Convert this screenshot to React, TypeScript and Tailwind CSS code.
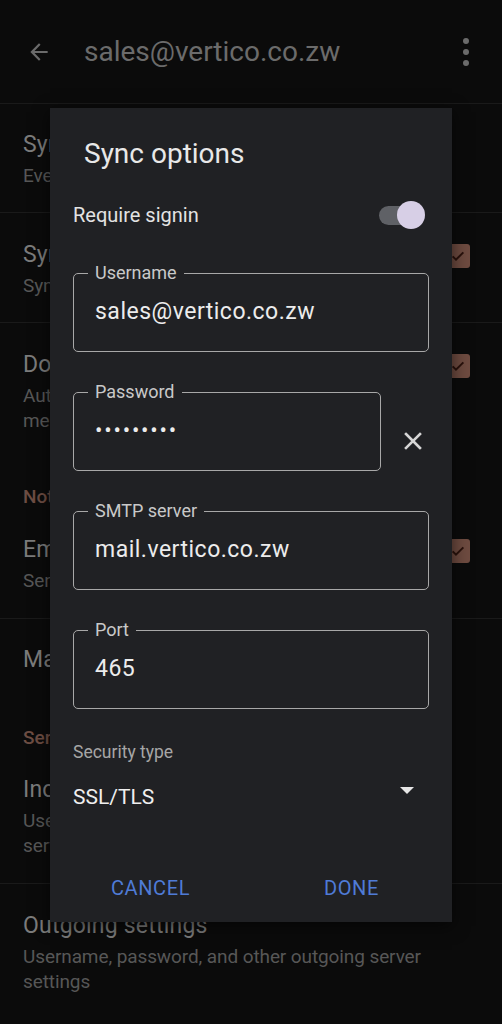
import React from "react";

const font = { fontFamily: "Roboto, 'Noto Sans', sans-serif" };

function Item({
  title,
  sub,
  h,
  pt,
  check,
  border = true,
}: {
  title: string;
  sub?: string[];
  h: string;
  pt: string;
  check?: boolean;
  border?: boolean;
}) {
  return (
    <div className={`${h} ${pt} ${border ? "border-b border-[#1a1a1a]" : ""} flex items-start justify-between pl-[23px] pr-[32px]`}>
      <div className="flex flex-col">
        <div className="text-[23px] leading-[28px] tracking-[0.2px] text-[#7b7b7b]">{title}</div>
        {sub && (
          <div className="mt-[4px] flex flex-col">
            {sub.map((s) => (
              <div key={s} className="text-[19px] leading-[25px] tracking-[-0.1px] text-[#575757]">
                {s}
              </div>
            ))}
          </div>
        )}
      </div>
      {check && (
        <div className="mt-[3px] flex h-[24px] w-[24px] items-center justify-center rounded-[3px] bg-[#6e4b40]">
          <svg width="16" height="16" viewBox="0 0 24 24" fill="none" stroke="#2a120c" strokeWidth="3">
            <path d="M4 12.5l5 5L20 6.5" />
          </svg>
        </div>
      )}
    </div>
  );
}

function Header({ text, pt, pb }: { text: string; pt: string; pb: string }) {
  return (
    <div className={`${pt} ${pb} pl-[23px] text-[19px] leading-[24px] font-medium text-[#6d4d43]`}>{text}</div>
  );
}

function Field({ label, value, w = "w-full" }: { label: string; value: React.ReactNode; w?: string }) {
  return (
    <fieldset className={`${w} rounded-[5px] border border-[#a8a8a8] pl-[14px] pt-[16px] pb-[25px]`}>
      <legend className="px-[7px] text-[18px] leading-[18px] text-[#c9c9c9]">{label}</legend>
      <div className="pl-[7px] text-[23px] leading-[28px] tracking-[0.5px] text-[#ececec]">{value}</div>
    </fieldset>
  );
}

export default function App() {
  return (
    <div className="relative h-[1024px] w-[502px] overflow-hidden bg-[#0b0b0b]" style={font}>
      {/* App bar */}
      <div className="flex h-[104px] items-center border-b border-[#1a1a1a] pl-[26px] pr-[33px]">
        <svg width="26" height="26" viewBox="0 0 24 24" fill="#6b6b6b">
          <path d="M20 11H7.83l5.59-5.59L12 4l-8 8 8 8 1.41-1.41L7.83 13H20v-2z" />
        </svg>
        <div className="ml-[32px] text-[28px] leading-[32px] text-[#6b6b6b]">sales@vertico.co.zw</div>
        <div className="ml-auto flex flex-col items-center gap-[5px]">
          <span className="h-[6px] w-[6px] rounded-full bg-[#6b6b6b]" />
          <span className="h-[6px] w-[6px] rounded-full bg-[#6b6b6b]" />
          <span className="h-[6px] w-[6px] rounded-full bg-[#6b6b6b]" />
        </div>
      </div>

      {/* Background list */}
      <Item h="h-[109px]" pt="pt-[27px]" title="Sync frequency" sub={["Every 15 minutes"]} />
      <Item h="h-[110px]" pt="pt-[28px]" title="Sync email" sub={["Sync this account"]} check />
      <Item
        h="h-[132px]"
        pt="pt-[28px]"
        title="Download attachments"
        sub={["Auto-download attachments to recent", "messages via Wi-Fi"]}
        check
        border={false}
      />
      <Header text="Notification settings" pt="pt-[30px]" pb="pb-[14px]" />
      <Item h="h-[96px]" pt="pt-[13px]" title="Email notifications" sub={["Sent when new email arrives"]} check />
      <Item h="h-[82px]" pt="pt-[27px]" title="Manage notifications" border={false} />
      <Header text="Server settings" pt="pt-[25px]" pb="pb-[14px]" />
      <Item
        h="h-[120px]"
        pt="pt-[12px]"
        title="Incoming settings"
        sub={["Username, password, and other incoming", "server settings"]}
      />
      <Item
        h="h-[140px]"
        pt="pt-[28px]"
        title="Outgoing settings"
        sub={["Username, password, and other outgoing server", "settings"]}
        border={false}
      />

      {/* Dialog */}
      <div className="absolute left-[50px] top-[108px] flex h-[814px] w-[402px] flex-col bg-[#202124] shadow-[0_4px_16px_rgba(0,0,0,0.6)]">
        <div className="mt-[30px] pl-[34px] text-[28px] leading-[32px] text-[#e8e8e8]">Sync options</div>

        <div className="mt-[29px] flex h-[32px] items-center justify-between pl-[23px] pr-[27px]">
          <div className="text-[20px] leading-[24px] text-[#e3e3e3]">Require signin</div>
          <div className="relative flex h-[28px] w-[46px] items-center">
            <div className="h-[19px] w-[40px] rounded-full bg-[#5f6166]" />
            <div className="absolute right-0 top-0 h-[28px] w-[28px] rounded-full bg-[#d7cfe6]" />
          </div>
        </div>

        <div className="mt-[33px] flex flex-col gap-[31px] px-[23px]">
          <Field label="Username" value="sales@vertico.co.zw" />
          <div className="flex items-start">
            <Field
              label="Password"
              w="w-[308px]"
              value={<span className="text-[22px] tracking-[1.8px]">•••••••••</span>}
            />
            <svg className="ml-[22px] mt-[48px]" width="20" height="20" viewBox="0 0 20 20" stroke="#d6d6d6" strokeWidth="2.6" strokeLinecap="square">
              <path d="M3 3L17 17M17 3L3 17" />
            </svg>
          </div>
          <Field label="SMTP server" value="mail.vertico.co.zw" />
          <Field label="Port" value="465" />
        </div>

        <div className="mt-[33px] pl-[23px] text-[17.5px] leading-[20px] text-[#a6a6a6]">Security type</div>
        <div className="mt-[21px] flex h-[28px] items-center justify-between pl-[23px] pr-[38px]">
          <div className="text-[21px] leading-[28px] text-[#efefef]">SSL/TLS</div>
          <svg className="-mt-[14px]" width="14" height="7" viewBox="0 0 14 7" fill="#e6e6e6">
            <path d="M0 0h14L7 7z" />
          </svg>
        </div>

        <div className="mt-[65px] grid grid-cols-2 text-center text-[20px] leading-[24px] tracking-[0.6px] text-[#4f7bd6]">
          <div>CANCEL</div>
          <div>DONE</div>
        </div>
      </div>
    </div>
  );
}
